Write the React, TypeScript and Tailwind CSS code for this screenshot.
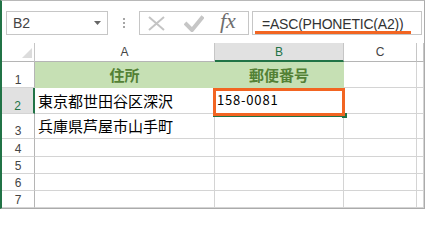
import type * as React from "react";

const COLS = "grid grid-cols-[33px_180px_129px_73px_1fr]";
const SANS = "font-['Liberation_Sans',Arial,sans-serif]";
const JP = "font-['Noto_Sans_CJK_JP','Noto_Sans_CJK_SC',sans-serif]";

/** Light grey cancel / enter marks and the italic fx of the formula bar. */
function FormulaButtons() {
	return (
		<div className="ml-[14px] flex h-[24px] w-[110px] items-center border border-[#c6c6c6] pl-[8px]">
			<svg width="17" height="15" viewBox="0 0 17 15" className="mt-[1px]">
				<path
					d="M1 1 L16 14 M16 1 L1 14"
					stroke="#c4c4c4"
					strokeWidth="2"
					fill="none"
				/>
			</svg>
			<svg width="20" height="17" viewBox="0 0 20 17" className="ml-[19px] mt-[1px]">
				<polyline
					points="1,8 8,15 19,1.5"
					stroke="#c6c6c6"
					strokeWidth="4"
					fill="none"
				/>
			</svg>
			<span className="mb-[4px] ml-[16px] font-['Liberation_Serif',serif] text-[22px] italic leading-none text-[#6e6e6e]">
				fx
			</span>
		</div>
	);
}

function Toolbar() {
	return (
		<div className="flex h-[42px] shrink-0 items-start pl-[4px] pt-[10px]">
			<div className="flex h-[24px] w-[102px] items-center justify-between border border-[#c6c6c6] pl-[6px] pr-[6px]">
				<span className={`${SANS} text-[14px] leading-none text-[#444]`}>B2</span>
				<svg width="7" height="4" viewBox="0 0 7 4">
					<polygon points="0,0 7,0 3.5,4" fill="#666" />
				</svg>
			</div>
			<div className="ml-[15px] mt-[7px] flex flex-col gap-[2px]">
				<span className="size-[2px] bg-[#a6a6a6]" />
				<span className="size-[2px] bg-[#a6a6a6]" />
				<span className="size-[2px] bg-[#a6a6a6]" />
			</div>
			<FormulaButtons />
			<div className="ml-[3px] h-[24px] w-[170px] border border-[#c6c6c6] pl-[9px] pt-[5px]">
				<span
					className={`${SANS} block text-[14px] leading-none tracking-[-0.2px] text-[#333]`}
				>
					=ASC(PHONETIC(A2))
				</span>
			</div>
		</div>
	);
}

function ColumnHeader({
	label,
	active,
}: {
	label: string;
	active?: boolean;
}) {
	return (
		<div
			className={
				active
					? `${SANS} flex items-center justify-center border-b-2 border-r border-b-[#217346] border-r-[#c6c6c6] bg-[#e1e1e1] text-[12px] leading-none text-[#217346]`
					: `${SANS} flex items-center justify-center border-b border-r border-b-[#b5b5b5] border-r-[#c6c6c6] text-[12px] leading-none text-[#444]`
			}
		>
			{label}
		</div>
	);
}

function RowHeader({ n, active }: { n: number; active?: boolean }) {
	return (
		<div
			className={
				active
					? `${SANS} flex items-end justify-center border-b border-r-2 border-b-[#d4d4d4] border-r-[#217346] bg-[#e1e1e1] pb-[1px] text-[12px] leading-none text-[#217346]`
					: `${SANS} flex items-end justify-center border-b border-r border-b-[#d4d4d4] border-r-[#b5b5b5] pb-[1px] text-[12px] leading-none text-[#444]`
			}
		>
			{n}
		</div>
	);
}

function Cell({ children }: { children?: React.ReactNode }) {
	return (
		<div className="flex items-end overflow-hidden whitespace-nowrap border-b border-r border-[#d4d4d4]">
			{children}
		</div>
	);
}

function EmptyRow({ n, h }: { n: number; h: string }) {
	return (
		<div className={`${COLS} ${h}`}>
			<RowHeader n={n} />
			<Cell />
			<Cell />
			<Cell />
			<Cell />
		</div>
	);
}

export default function App() {
	return (
		<div className="relative flex h-[209px] w-[425px] flex-col overflow-hidden border-b border-l-2 border-r border-t border-b-[#ababab] border-l-[#217346] border-r-[#ababab] border-t-[#b8b8b8] bg-white">
			<Toolbar />

			<div className={`${COLS} h-[20px]`}>
				<div className="flex items-end justify-end border-b border-r border-b-[#b5b5b5] border-r-[#c6c6c6] pb-[3px] pr-[2px]">
					<svg width="10" height="10" viewBox="0 0 10 10">
						<polygon points="10,0 10,10 0,10" fill="#dcdcdc" />
					</svg>
				</div>
				<ColumnHeader label="A" />
				<ColumnHeader label="B" active />
				<ColumnHeader label="C" />
				<ColumnHeader label="" />
			</div>

			<div className={`${COLS} h-[27px]`}>
				<RowHeader n={1} />
				<div
					className={`${JP} flex items-end justify-center border-b border-r border-[#c6e0b4] bg-[#c6e0b4] pb-[5px] text-[15px] font-bold leading-none text-[#538135]`}
				>
					住所
				</div>
				<div
					className={`${JP} flex items-end justify-center border-b border-r border-[#c6e0b4] bg-[#c6e0b4] pb-[5px] text-[15px] font-bold leading-none text-[#538135]`}
				>
					郵便番号
				</div>
				<Cell />
				<Cell />
			</div>

			<div className={`${COLS} h-[27px]`}>
				<RowHeader n={2} active />
				<Cell>
					<span className={`${JP} pb-[5px] pl-[3px] text-[15px] leading-none text-black`}>
						東京都世田谷区深沢
					</span>
				</Cell>
				<Cell>
					<span
						className={`${JP} pb-[7px] pl-[2px] text-[13px] leading-none tracking-[0.8px] text-black`}
					>
						158-0081
					</span>
				</Cell>
				<Cell />
				<Cell />
			</div>

			<div className={`${COLS} h-[27px]`}>
				<RowHeader n={3} />
				<Cell>
					<span className={`${JP} pb-[5px] pl-[3px] text-[15px] leading-none text-black`}>
						兵庫県芦屋市山手町
					</span>
				</Cell>
				<Cell />
				<Cell />
				<Cell />
			</div>

			<EmptyRow n={4} h="h-[18px]" />
			<EmptyRow n={5} h="h-[18px]" />
			<EmptyRow n={6} h="h-[18px]" />
			<EmptyRow n={7} h="h-[18px]" />

			{/* annotation: underline of the formula text */}
			<div className="absolute left-[253px] top-[30px] h-[3px] w-[156px] bg-[#f26522]" />

			{/* selection outline, fill handle and the orange annotation frame */}
			<div className="absolute left-[211px] top-[115px] h-[1px] w-[133px] bg-[#217346]" />
			<div className="absolute left-[340px] top-[112px] size-[5px] bg-[#217346]" />
			<div className="absolute left-[211px] top-[87px] h-[28px] w-[132px] border-[3px] border-[#f26522]" />
		</div>
	);
}
